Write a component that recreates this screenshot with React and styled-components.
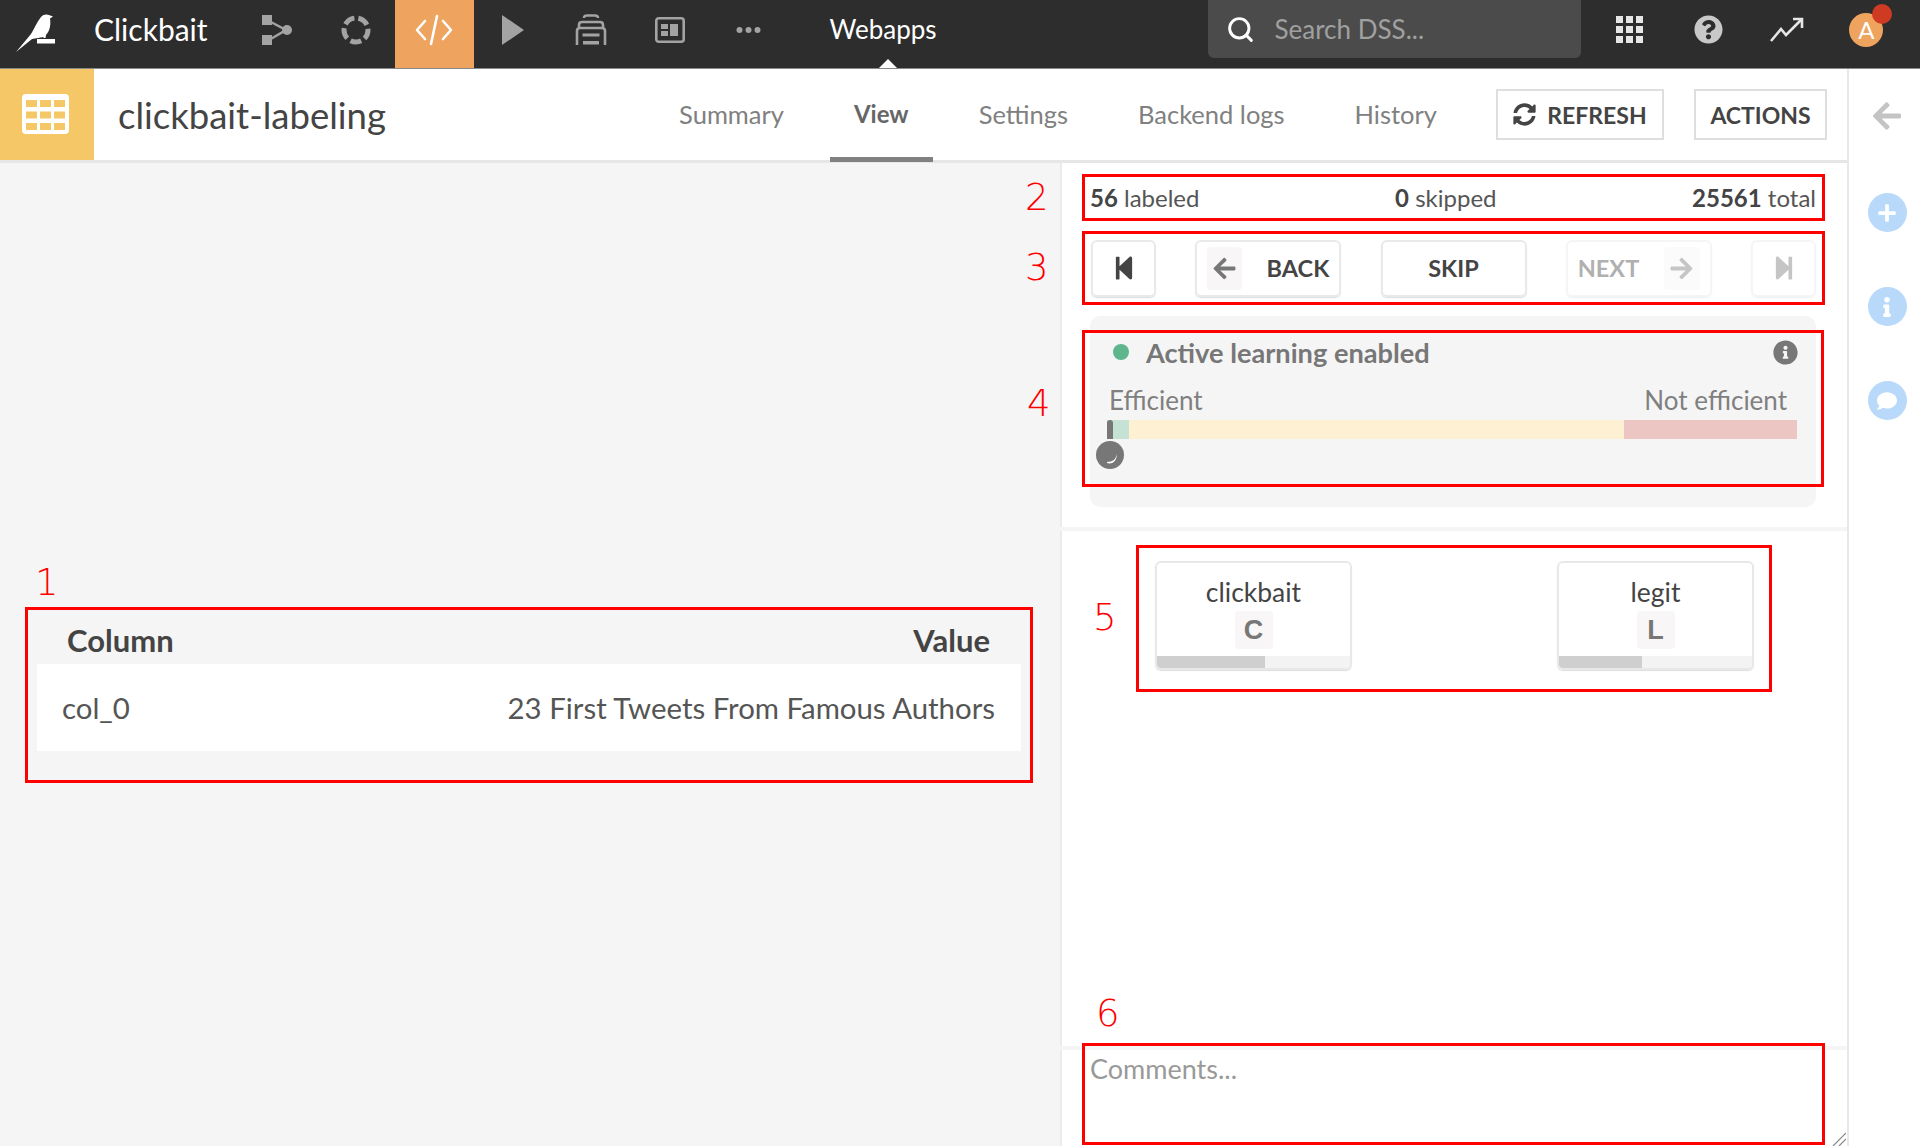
import React from 'react';
import styled, { createGlobalStyle } from 'styled-components';
import { FaSyncAlt, FaArrowLeft, FaArrowRight, FaStepBackward, FaStepForward, FaInfoCircle, FaPlus, FaInfo, FaComment, FaQuestionCircle } from 'react-icons/fa';
import { Search } from 'lucide-react';

const Global = createGlobalStyle`
  html, body { margin: 0; padding: 0; height: 100%; }
  body { font-family: "Lato", "Noto Sans", sans-serif; color: #444; background: #fff; overflow: hidden; }
  * { box-sizing: border-box; }
`;

const Page = styled.div`
  width: 1920px;
  height: 1146px;
  display: flex;
  flex-direction: column;
  overflow: hidden;
`;

const TopBar = styled.header`
  height: 69px;
  flex: none;
  display: flex;
  background: #2d2d2d;
  border-bottom: 1px solid #888;
`;

const LogoCell = styled.div`
  width: 94px;
  display: flex;
  align-items: center;
  padding-left: 14px;
`;

const Brand = styled.div`
  width: 144px;
  color: #fff;
  font-size: 30px;
  line-height: 58px;
`;

const NavCell = styled.div`
  width: 78.5px;
  height: 68px;
  display: flex;
  align-items: center;
  justify-content: center;
  padding-bottom: 9px;
  color: #a3a3a3;
  background: ${p => (p.$active ? '#eea35e' : 'transparent')};
`;

const SectionLabel = styled.div`
  position: relative;
  width: 420px;
  padding-left: 42px;
  color: #fff;
  font-size: 26px;
  line-height: 58px;
  &::after {
    content: '';
    position: absolute;
    left: 91px;
    bottom: 0;
    border-left: 9px solid transparent;
    border-right: 9px solid transparent;
    border-bottom: 9px solid #fff;
  }
`;

const SearchBox = styled.div`
  width: 373px;
  height: 58px;
  display: flex;
  align-items: center;
  gap: 20px;
  padding-left: 18px;
  background: #4b4b4b;
  border-radius: 0 0 6px 6px;
  color: #fff;
  margin-right: 10px;
`;

const SearchText = styled.span`
  color: #a0a0a0;
  font-size: 26px;
`;

const Body = styled.div`
  flex: 1;
  display: flex;
  min-height: 0;
`;

const Workspace = styled.div`
  width: 1847px;
  display: flex;
  flex-direction: column;
`;

const SubBar = styled.div`
  height: 94px;
  flex: none;
  display: flex;
  align-items: center;
  padding-right: 20px;
  border-bottom: 3px solid #e6e6e6;
`;

const TypeIcon = styled.div`
  width: 94px;
  height: 91px;
  flex: none;
  display: flex;
  align-items: center;
  justify-content: center;
  padding: 0 3px 2px 0;
  background: #f5c766;
`;

const Title = styled.h1`
  margin: 0 0 0 24px;
  font-size: 36.5px;
  font-weight: 400;
  color: #444;
`;

const Tabs = styled.nav`
  margin-left: auto;
  display: flex;
  align-items: stretch;
  height: 91px;
  gap: 22px;
`;

const Tab = styled.div`
  padding: 1px 24px 0;
  display: flex;
  align-items: center;
  font-size: ${p => (p.$active ? 24 : 25.5)}px;
  font-weight: ${p => (p.$active ? 700 : 400)};
  color: ${p => (p.$active ? '#666' : '#808080')};
  border-bottom: 5px solid ${p => (p.$active ? '#808080' : 'transparent')};
  margin-bottom: -2px;
`;

const OutlineButton = styled.div`
  width: ${p => p.$w}px;
  height: 51px;
  margin-left: ${p => p.$ml}px;
  display: flex;
  align-items: center;
  justify-content: center;
  gap: 11px;
  border: 2px solid #dedede;
  font-size: 23px;
  font-weight: 700;
  color: #444;
`;

const Panels = styled.div`
  flex: 1;
  display: flex;
  min-height: 0;
`;

const LeftPanel = styled.section`
  width: 1060px;
  padding: 444px 27px 0 25px;
  background: #f5f5f5;
`;

const RightPanel = styled.section`
  flex: 1;
  display: flex;
  flex-direction: column;
  padding-top: 11px;
  background: #fff;
  box-shadow: inset 2px 0 0 #ebebeb;
`;

const Region = styled.div`
  position: relative;
  border: 3px solid #f00;
`;

const Mark = styled.span`
  position: absolute;
  left: ${p => p.$x}px;
  top: ${p => p.$y}px;
  color: #f00;
  font-family: "DejaVu Sans", sans-serif;
  font-weight: 200;
  font-size: 37px;
  line-height: 44px;
`;

const TableRegion = styled(Region)`
  height: 176px;
  padding: 0 9px;
`;

const TableHead = styled.div`
  height: 54px;
  display: flex;
  align-items: center;
  justify-content: space-between;
  padding: 6px 31px 0 30px;
  font-size: 31px;
  font-weight: 700;
  color: #444;
`;

const TableRow = styled.div`
  height: 87px;
  display: flex;
  align-items: center;
  justify-content: space-between;
  padding: 0 26px 0 25px;
  background: #fff;
  font-size: 29.4px;
  color: #555;
`;

const StatsRegion = styled(Region)`
  margin-left: 22px;
  width: 743px;
  height: 47px;
  padding: 0 6px 0 5px;
  display: flex;
  justify-content: space-between;
  align-items: center;
  font-size: 24px;
  color: #555;
`;

const Stat = styled.div`
  b { color: #444; }
`;

const NavRegion = styled(Region)`
  margin: 10px 0 0 22px;
  width: 743px;
  height: 74px;
  padding: 0 6px;
  display: flex;
  align-items: center;
  justify-content: space-between;
`;

const StepButton = styled.div`
  width: ${p => p.$w}px;
  height: 57px;
  display: flex;
  align-items: center;
  justify-content: ${p => p.$justify || 'center'};
  gap: 25px;
  padding: 0 10px;
  border: 2px solid #e9e9e9;
  border-radius: 6px;
  box-shadow: 0 1px 1px #ddd;
  font-size: 23.5px;
  font-weight: 700;
  color: #444;
  opacity: ${p => (p.$off ? 0.42 : 1)};
`;

const KeyCap = styled.span`
  width: ${p => p.$w}px;
  height: ${p => p.$h}px;
  display: flex;
  align-items: center;
  justify-content: center;
  background: #f8f6f6;
  border-radius: 4px;
  color: #777;
  font-family: "Liberation Sans", sans-serif;
  font-weight: 700;
  font-size: 27px;
`;

const LearningCard = styled.div`
  margin: 11px 0 0 30px;
  width: 726px;
  height: 191px;
  padding-top: 14px;
  background: #f5f5f5;
  border-radius: 10px;
`;

const LearningRegion = styled(Region)`
  margin: 0 -8px;
  height: 157px;
  padding: 0 20px 0 24px;
`;

const LearningHead = styled.div`
  height: 38px;
  display: flex;
  align-items: center;
  color: #777;
  font-size: 27.2px;
  font-weight: 700;
`;

const Dot = styled.span`
  width: 16px;
  height: 16px;
  margin: 0 17px 0 4px;
  border-radius: 50%;
  background: #5fb68d;
`;

const InfoSlot = styled.span`
  margin-left: auto;
  display: flex;
  margin-right: 3px;
  color: #777;
`;

const ScaleLabels = styled.div`
  display: flex;
  justify-content: space-between;
  padding: 0 14px 0 0;
  font-size: 26px;
  color: #808080;
  line-height: 30px;
  margin-top: 14px;
`;

const Scale = styled.div`
  position: relative;
  display: flex;
  margin-top: 5px;
  height: 19px;
  width: 690px;
  margin-left: -2px;
`;

const ScalePart = styled.div`
  width: ${p => p.$w}px;
  background: ${p => p.$c};
`;

const Pointer = styled.div`
  position: absolute;
  left: 0;
  top: 0;
  width: 6px;
  height: 19px;
  background: #777;
  border-radius: 3px 3px 0 0;
`;

const Knob = styled.svg`
  position: absolute;
  left: -11px;
  top: 21px;
`;

const Rule = styled.div`
  height: 4px;
  margin-top: 20px;
  background: #f5f5f5;
  flex: none;
`;

const LabelRegion = styled(Region)`
  margin: 14px 0 0 76px;
  width: 636px;
  height: 147px;
  padding: 13px 15px 0 16px;
  display: flex;
  justify-content: space-between;
  align-items: flex-start;
`;

const LabelCard = styled.div`
  width: 197px;
  height: 109px;
  border: 2px solid #e8e8e8;
  border-radius: 6px;
  box-shadow: 0 1px 1px #ddd;
  overflow: hidden;
  display: flex;
  flex-direction: column;
  align-items: center;
`;

const LabelName = styled.div`
  margin-top: 12px;
  height: 36px;
  line-height: 34px;
  font-size: 26.5px;
  color: #444;
`;

const LabelBar = styled.div`
  margin-top: auto;
  width: 100%;
  height: 12px;
  background: #f3f3f3;
`;

const LabelFill = styled.div`
  height: 100%;
  background: #cfcfcf;
`;

const CommentArea = styled.div`
  position: relative;
  margin-top: auto;
  height: 100px;
  flex: none;
  display: flex;
  border-top: 4px solid #f5f5f5;
`;

const CommentInput = styled.textarea`
  flex: 1;
  padding: 2px 30px;
  border: 0;
  outline: 0;
  resize: none;
  font-family: "Lato", sans-serif;
  font-size: 27px;
  background: transparent;
  &::placeholder { color: #999; opacity: 1; }
`;

const CommentFrame = styled.div`
  position: absolute;
  left: 22px;
  top: -7px;
  width: 743px;
  height: 102px;
  border: 3px solid #f00;
  pointer-events: none;
`;

const ResizeGrip = styled.svg`
  position: absolute;
  right: 1px;
  bottom: 0;
`;

const Rail = styled.aside`
  flex: 1;
  display: flex;
  flex-direction: column;
  align-items: center;
  padding: 31px 0 0 5px;
  border-left: 2px solid #e8e8e8;
  background: #fff;
`;

const RailBack = styled.div`
  color: #c4c4c4;
  height: 30px;
  margin-bottom: 63px;
  display: flex;
`;

const RailButton = styled.div`
  width: 39px;
  height: 39px;
  margin-bottom: 55px;
  border-radius: 50%;
  display: flex;
  align-items: center;
  justify-content: center;
  background: #b9d9fa;
  color: #fff;
`;

const Avatar = styled.div`
  position: relative;
  width: 34px;
  height: 34px;
  margin-left: 2px;
  border-radius: 50%;
  background: #eea35e;
  color: #fff;
  font-size: 24px;
  display: flex;
  align-items: center;
  justify-content: center;
  &::after {
    content: '';
    position: absolute;
    right: -9px;
    top: -9px;
    width: 20px;
    height: 20px;
    border-radius: 50%;
    background: #cf3a22;
  }
`;

const Bird = () => (
  <svg width="42" height="40" viewBox="0 0 42 40" fill="#fff">
    <path d="M2 38 L17 20 C20 15 23 8 27 3 C29 0 33 0 35 1 L39 2.5 L36 4.5 C37 10 36 17 32 21 L31.5 24 L29.5 24 L29.5 23 C26 24 22 24 18 25 Z" />
    <rect x="23" y="25" width="18" height="4.5" />
  </svg>
);

const FlowIcon = () => (
  <svg width="32" height="32" viewBox="0 0 32 32" fill="currentColor" stroke="currentColor">
    <rect x="1" y="1" width="10" height="10" stroke="none" />
    <rect x="1" y="21" width="10" height="10" stroke="none" />
    <circle cx="26" cy="16" r="5" stroke="none" />
    <path d="M8 7 L25 16 L8 26" fill="none" strokeWidth="2.5" />
  </svg>
);

const RecipeIcon = () => (
  <svg width="30" height="30" viewBox="0 0 30 30" fill="none" stroke="currentColor" strokeWidth="5">
    <circle cx="15" cy="15" r="12" strokeDasharray="11 4.08" strokeDashoffset="-13.35" />
  </svg>
);

const CodeIcon = () => (
  <svg width="38" height="32" viewBox="0 0 38 32" fill="none" stroke="#fff" strokeWidth="2.6" strokeLinecap="round" strokeLinejoin="round">
    <path d="M10 7 L2 16 L10 25" />
    <path d="M28 7 L36 16 L28 25" />
    <path d="M22 2 L16 30" />
  </svg>
);

const PlayIcon = () => (
  <svg width="24" height="32" viewBox="0 0 24 32" fill="currentColor">
    <path d="M1 1 L23 16 L1 31 Z" />
  </svg>
);

const StackIcon = () => (
  <svg width="32" height="32" viewBox="0 0 32 32" fill="none" stroke="currentColor" strokeWidth="2.6">
    <path d="M9 4 C9 2 10 1.5 12 1.5 L20 1.5 C22 1.5 23 2 23 4" />
    <path d="M4 13 L4 11 C4 9 5 8 7 8 L25 8 C27 8 28 9 28 11 L28 13" />
    <path d="M2 31 L2 17 C2 15 3 14 5 14 L27 14 C29 14 30 15 30 17 L30 31" />
    <rect x="8" y="20" width="16" height="2" fill="currentColor" strokeWidth="1" />
    <rect x="8" y="27" width="16" height="3.5" fill="currentColor" stroke="none" />
  </svg>
);

const BoardIcon = () => (
  <svg width="30" height="26" viewBox="0 0 30 26" fill="currentColor">
    <rect x="1.3" y="1.3" width="27.4" height="23.4" rx="2.5" fill="none" stroke="currentColor" strokeWidth="2.6" />
    <rect x="6" y="7" width="7" height="5" />
    <rect x="6" y="14" width="7" height="5" />
    <rect x="15" y="7" width="8" height="12" />
  </svg>
);

const DotsIcon = () => (
  <svg width="25" height="8" viewBox="0 0 25 8" fill="currentColor">
    <circle cx="3.5" cy="4" r="3" />
    <circle cx="12.5" cy="4" r="3" />
    <circle cx="21.5" cy="4" r="3" />
  </svg>
);

const GridIcon = () => (
  <svg width="27" height="27" viewBox="0 0 27 27" fill="#e6e6e6">
    {[0, 10, 20].map(y => [0, 10, 20].map(x => <rect key={`${x}-${y}`} x={x} y={y} width="7" height="7" />))}
  </svg>
);

const TrendIcon = () => (
  <svg width="34" height="26" viewBox="0 0 34 26" fill="none" stroke="#e6e6e6" strokeWidth="2.6">
    <path d="M1 24 L11 12 L16 18 L31 3" />
    <path d="M23 2 L32 2 L32 11" />
  </svg>
);

const TableIcon = () => (
  <svg width="47" height="40" viewBox="0 0 47 40" fill="#f5c766">
    <rect width="47" height="40" rx="4" fill="#fff" />
    {[6, 17.5, 29].map(y => [4, 18, 32].map(x => <rect key={`${x}-${y}`} x={x} y={y} width="11" height="7" />))}
  </svg>
);

export default function App() {
  return (
    <Page>
      <Global />
      <TopBar>
        <LogoCell><Bird /></LogoCell>
        <Brand>Clickbait</Brand>
        <NavCell><FlowIcon /></NavCell>
        <NavCell><RecipeIcon /></NavCell>
        <NavCell $active><CodeIcon /></NavCell>
        <NavCell><PlayIcon /></NavCell>
        <NavCell><StackIcon /></NavCell>
        <NavCell><BoardIcon /></NavCell>
        <NavCell><DotsIcon /></NavCell>
        <SectionLabel>Webapps</SectionLabel>
        <SearchBox>
          <Search size={29} strokeWidth={2.4} />
          <SearchText>Search DSS...</SearchText>
        </SearchBox>
        <NavCell><GridIcon /></NavCell>
        <NavCell><FaQuestionCircle size={29} color="#c8c8c8" /></NavCell>
        <NavCell><TrendIcon /></NavCell>
        <NavCell><Avatar>A</Avatar></NavCell>
      </TopBar>
      <Body>
        <Workspace>
          <SubBar>
            <TypeIcon><TableIcon /></TypeIcon>
            <Title>clickbait-labeling</Title>
            <Tabs>
              <Tab>Summary</Tab>
              <Tab $active>View</Tab>
              <Tab>Settings</Tab>
              <Tab>Backend logs</Tab>
              <Tab>History</Tab>
            </Tabs>
            <OutlineButton $w={168} $ml={35}><FaSyncAlt size={23} /> REFRESH</OutlineButton>
            <OutlineButton $w={133} $ml={30}>ACTIONS</OutlineButton>
          </SubBar>
          <Panels>
            <LeftPanel>
              <TableRegion>
                <Mark $x={7} $y={-49}>1</Mark>
                <TableHead><span>Column</span><span>Value</span></TableHead>
                <TableRow><span>col_0</span><span>23 First Tweets From Famous Authors</span></TableRow>
              </TableRegion>
            </LeftPanel>
            <RightPanel>
              <StatsRegion>
                <Mark $x={-60} $y={-1}>2</Mark>
                <Stat><b>56</b> labeled</Stat>
                <Stat><b>0</b> skipped</Stat>
                <Stat><b>25561</b> total</Stat>
              </StatsRegion>
              <NavRegion>
                <Mark $x={-60} $y={12}>3</Mark>
                <StepButton $w={65}><FaStepBackward size={26} /></StepButton>
                <StepButton $w={146} $justify="flex-start">
                  <KeyCap $w={37} $h={43}><FaArrowLeft size={25} color="#777" /></KeyCap>BACK
                </StepButton>
                <StepButton $w={146}>SKIP</StepButton>
                <StepButton $w={146} $off $justify="flex-end">
                  NEXT<KeyCap $w={37} $h={43}><FaArrowRight size={25} color="#777" /></KeyCap>
                </StepButton>
                <StepButton $w={65} $off><FaStepForward size={26} color="#777" /></StepButton>
              </NavRegion>
              <LearningCard>
                <LearningRegion>
                  <Mark $x={-58} $y={49}>4</Mark>
                  <LearningHead>
                    <Dot />Active learning enabled
                    <InfoSlot><FaInfoCircle size={25} /></InfoSlot>
                  </LearningHead>
                  <ScaleLabels><span>Efficient</span><span>Not efficient</span></ScaleLabels>
                  <Scale>
                    <ScalePart $w={22} $c="#c5e2d5" />
                    <ScalePart $w={495} $c="#fdf0d3" />
                    <ScalePart $w={173} $c="#ecc6c3" />
                    <Pointer />
                    <Knob width="28" height="28" viewBox="0 0 28 28">
                      <circle cx="14" cy="14" r="14" fill="#777" />
                      <path d="M11 21 C17 21 20 18 21 13 C21 19 17 24 11 22 Z" fill="#fff" />
                    </Knob>
                  </Scale>
                </LearningRegion>
              </LearningCard>
              <Rule />
              <LabelRegion>
                <Mark $x={-46} $y={48}>5</Mark>
                <LabelCard>
                  <LabelName>clickbait</LabelName>
                  <KeyCap $w={38} $h={38}>C</KeyCap>
                  <LabelBar><LabelFill style={{ width: '56%' }} /></LabelBar>
                </LabelCard>
                <LabelCard>
                  <LabelName>legit</LabelName>
                  <KeyCap $w={38} $h={38}>L</KeyCap>
                  <LabelBar><LabelFill style={{ width: '43%' }} /></LabelBar>
                </LabelCard>
              </LabelRegion>
              <CommentArea>
                <Mark $x={36} $y={-58}>6</Mark>
                <CommentInput placeholder="Comments..." />
                <CommentFrame />
                <ResizeGrip width="14" height="14" viewBox="0 0 14 14" stroke="#888" strokeWidth="1.2">
                  <path d="M1 14 L14 1 M7 14 L14 7" />
                </ResizeGrip>
              </CommentArea>
            </RightPanel>
          </Panels>
        </Workspace>
        <Rail>
          <RailBack><FaArrowLeft size={32} /></RailBack>
          <RailButton><FaPlus size={20} /></RailButton>
          <RailButton><FaInfo size={20} /></RailButton>
          <RailButton><FaComment size={20} /></RailButton>
        </Rail>
      </Body>
    </Page>
  );
}
